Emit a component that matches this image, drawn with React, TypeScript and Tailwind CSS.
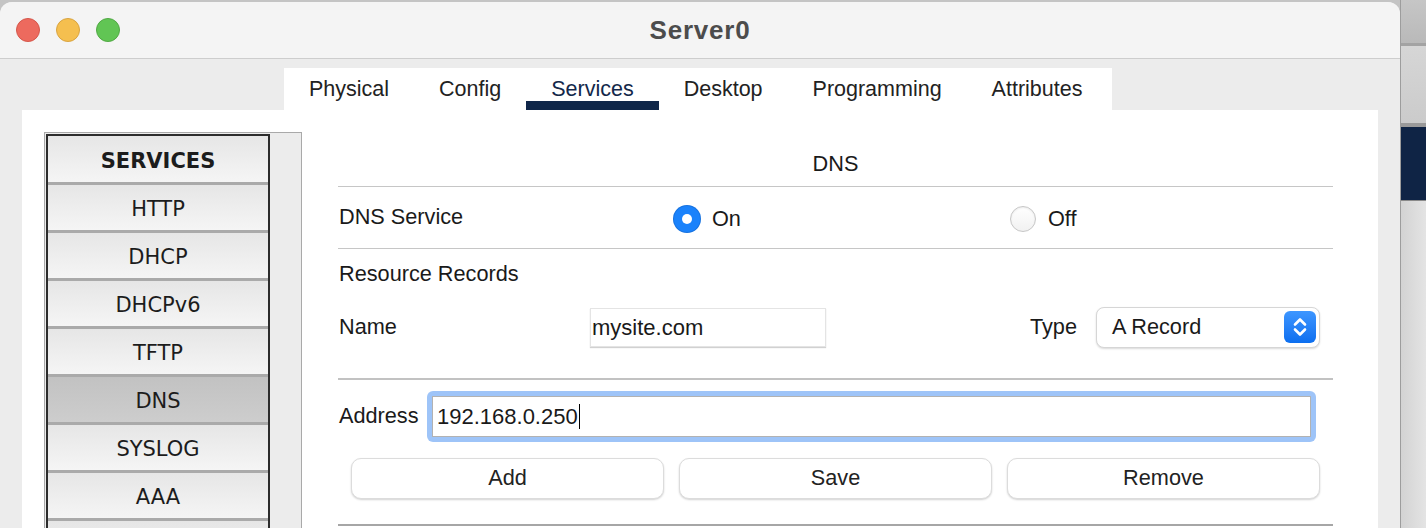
import React from 'react';

const tabs = ['Physical', 'Config', 'Services', 'Desktop', 'Programming', 'Attributes'];
const services = ['HTTP', 'DHCP', 'DHCPv6', 'TFTP', 'DNS', 'SYSLOG', 'AAA'];

const sans = "font-['Liberation_Sans',Arial,sans-serif]";

const TitleBar = () => (
  <div className="relative h-[57px] border-b border-[#cdcdcd] bg-[#f4f4f4] flex items-center justify-center">
    <div className="absolute left-[16px] top-[16px] flex gap-[16px]">
      <div className="w-[24px] h-[24px] rounded-full bg-[#ed6a5e] border border-[#d5574b]" />
      <div className="w-[24px] h-[24px] rounded-full bg-[#f5bf4f] border border-[#d9a441]" />
      <div className="w-[24px] h-[24px] rounded-full bg-[#61c554] border border-[#51a944]" />
    </div>
    <h1 className={`${sans} text-[26px] font-bold tracking-[0.8px] text-[#4c4c4c]`}>Server0</h1>
  </div>
);

const Sidebar = () => (
  <div className="w-[258px] h-[420px] shrink-0 border border-[#a9a9a9] bg-[#ececec] pl-px pt-px">
    <div className="w-[224px] border-2 border-[#2c2c2c] font-['DejaVu_Sans',Verdana,sans-serif] text-[21px] text-[#1c1c1c]">
      <div className="h-[46px] pt-[5px] flex items-center justify-center font-bold bg-gradient-to-b from-[#e6e6e6] to-[#f5f5f5]">
        SERVICES
      </div>
      {services.map((s) => (
        <div
          key={s}
          className={`h-[48px] pt-[4px] border-t-[3px] border-[#aaaaaa] flex items-center justify-center ${
            s === 'DNS' ? 'bg-gradient-to-b from-[#c2c2c2] to-[#cdcdcd]' : 'bg-gradient-to-b from-[#e6e6e6] to-[#f5f5f5]'
          }`}
        >
          {s}
        </div>
      ))}
      <div className="h-[48px] border-t-[3px] border-[#aaaaaa] bg-gradient-to-b from-[#e6e6e6] to-[#f5f5f5]" />
    </div>
  </div>
);

const Chevrons = () => (
  <svg width="18" height="24" viewBox="0 0 18 24" fill="none" stroke="white" strokeWidth="2.6" strokeLinecap="round" strokeLinejoin="round">
    <path d="M4 9.5 L9 4.5 L14 9.5" />
    <path d="M4 14.5 L9 19.5 L14 14.5" />
  </svg>
);

const DnsPanel = () => (
  <div className={`w-[995px] ml-[36px] ${sans} text-[21.7px] text-[#1a1a1a]`}>
    <div className="h-[54px] pt-[10px] flex items-center justify-center">DNS</div>
    <div className="h-px bg-[#c6c6c6]" />

    <div className="h-[61px] grid grid-cols-[336px_336px_1fr] items-center">
      <span className="pl-px">DNS Service</span>
      <label className="flex items-center gap-[12px] pt-[3px]">
        <span className="w-[26px] h-[26px] rounded-full bg-[#1a82fb] flex items-center justify-center shadow-[0_0_0_1px_#1672e0]">
          <span className="w-[10px] h-[10px] rounded-full bg-white" />
        </span>
        On
      </label>
      <label className="flex items-center gap-[12px] pt-[3px]">
        <span className="w-[26px] h-[26px] rounded-full border border-[#c6c6c6] bg-gradient-to-b from-white to-[#f1f1f1] shadow-[inset_0_1px_2px_rgba(0,0,0,0.08)]" />
        Off
      </label>
    </div>
    <div className="h-px bg-[#c6c6c6]" />

    <div className="h-[50px] flex items-center pl-px">Resource Records</div>
    <div className="h-[56px] flex items-center">
      <span className="w-[252px] pl-px">Name</span>
      <div className="w-[236px] h-[39px] border border-[#e4e4e4] shadow-[0_1px_1px_rgba(0,0,0,0.18)] flex items-center pl-[1px] text-[22px]">
        mysite.com
      </div>
      <div className="flex-1" />
      <span>Type</span>
      <div className="ml-[19px] mr-[13px] w-[224px] h-[41px] rounded-[8px] border border-[#d6d6d6] bg-white shadow-[0_1px_2px_rgba(0,0,0,0.15)] flex items-center justify-between pl-[15px] pr-[3px]">
        <span>A Record</span>
        <span className="w-[32px] h-[32px] rounded-[6px] bg-gradient-to-b from-[#3d96ff] to-[#0a6eef] flex items-center justify-center">
          <Chevrons />
        </span>
      </div>
    </div>
    <div className="h-[23px]" />
    <div className="h-[2px] bg-[#c2c2c2]" />

    <div className="pt-[11px] flex items-center">
      <span className="w-[89px] pl-px">Address</span>
      <div className="flex-1 mr-[17px] h-[51px] rounded-[6px] bg-[#9ec4f8] p-[5px]">
        <div className="h-full bg-white border border-[#b2b2b2] flex items-center pl-[4px] text-[22px]">
          192.168.0.250
          <span className="w-[1.5px] h-[25px] bg-black ml-[1px]" />
        </div>
      </div>
    </div>

    <div className="mt-[16px] px-[13px] grid grid-cols-3 gap-[15px]">
      {['Add', 'Save', 'Remove'].map((b) => (
        <button
          key={b}
          className="h-[41px] rounded-[10px] border border-[#dcdcdc] bg-white shadow-[0_1px_2px_rgba(0,0,0,0.18)] text-[#222]"
        >
          {b}
        </button>
      ))}
    </div>
    <div className="mt-[25px] h-[2px] bg-[#a6a6a6]" />
  </div>
);

const RightStrip = () => (
  <div className="w-[26px] shrink-0 flex flex-col border-l border-[#9d9d9d]">
    <div className="h-[43px] bg-gradient-to-b from-[#c6c6c6] to-[#b9b9b9]" />
    <div className="h-[3px] bg-[#a3a3a3]" />
    <div className="h-[77px] bg-gradient-to-b from-[#d6d6d6] to-[#cbcbcb]" />
    <div className="h-[4px] bg-[#9a9a9a]" />
    <div className="h-[73px] bg-[#0f2445]" />
    <div className="h-px bg-[#8a8a8a]" />
    <div className="flex-1 bg-gradient-to-r from-[#d3d3d3] to-[#e4e4e4]" />
  </div>
);

export default function App() {
  return (
    <div className="w-[1426px] h-[528px] overflow-hidden bg-[#c4c4c4] flex">
      <div className="w-[1400px] shrink-0 mt-[2px] rounded-t-[12px] overflow-hidden bg-[#ececec] flex flex-col">
        <TitleBar />
        <div className="flex-1 flex flex-col px-[22px] pt-[9px] min-h-0">
          <div className={`ml-[262px] w-[828px] h-[42px] bg-white flex ${sans} text-[21.5px] text-[#222]`}>
            {tabs.map((t) => (
              <div
                key={t}
                className={`relative px-[25px] flex items-center ${t === 'Services' ? 'text-[#13284a]' : ''}`}
              >
                {t}
                {t === 'Services' && <div className="absolute left-0 right-0 bottom-0 h-[9px] bg-[#0f2649]" />}
              </div>
            ))}
          </div>
          <div className="flex-1 min-h-0 overflow-hidden bg-white flex pt-[22px] pl-[22px] pr-[45px]">
            <Sidebar />
            <DnsPanel />
          </div>
        </div>
      </div>
      <RightStrip />
    </div>
  );
}
